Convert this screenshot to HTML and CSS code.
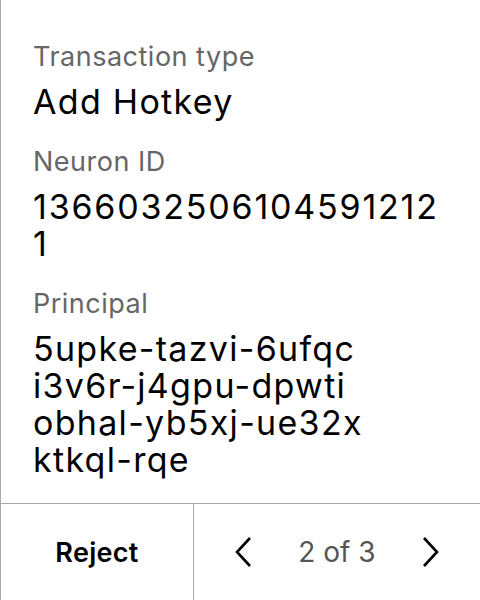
FILE: index.html
```html
<!DOCTYPE html>
<html>
<head>
<meta charset="utf-8">
<link rel="stylesheet" href="styles.css">
</head>
<body>
<div class="screen">
  <div class="content">
    <div class="field">
      <div class="label">Transaction type</div>
      <div class="value">Add Hotkey</div>
    </div>
    <div class="field">
      <div class="label">Neuron ID</div>
      <div class="value num">13660325061045912121</div>
    </div>
    <div class="field">
      <div class="label">Principal</div>
      <div class="value">5upke-tazvi-6ufqc<br>i3v6r-j4gpu-dpwti<br>obhal-yb5xj-ue32x<br>ktkql-rqe</div>
    </div>
  </div>
  <div class="footer">
    <div class="reject">Reject</div>
    <div class="nav">
      <svg class="chev" width="18" height="32" viewBox="0 0 18 32"><path d="M16 2 L3 16 L16 30" fill="none" stroke="#000" stroke-width="2.6"/></svg>
      <span class="pager">2 of 3</span>
      <svg class="chev" width="18" height="32" viewBox="0 0 18 32"><path d="M2 2 L15 16 L2 30" fill="none" stroke="#000" stroke-width="2.6"/></svg>
    </div>
  </div>
</div>
</body>
</html>
```
FILE: styles.css
```css
html, body {
  margin: 0;
  padding: 0;
  background: #fff;
}
.screen {
  width: 480px;
  height: 600px;
  box-sizing: border-box;
  border-left: 1px solid #aaa;
  display: flex;
  flex-direction: column;
  font-family: Inter, "Noto Sans", sans-serif;
  color: #000;
}
.content {
  flex: 1;
  padding: 41px 32px 0 32px;
  display: flex;
  flex-direction: column;
  gap: 26px;
}
.field {
  display: flex;
  flex-direction: column;
  gap: 10px;
}
.label {
  font-size: 27px;
  line-height: 32px;
  letter-spacing: 0.5px;
  color: #666;
}
.value {
  font-size: 34px;
  line-height: 37px;
  letter-spacing: 1.3px;
  word-break: break-all;
}
.value.num {
  letter-spacing: 1.8px;
}
.footer {
  height: 96px;
  border-top: 1px solid #aaa;
  display: flex;
}
.reject {
  width: 192px;
  border-right: 1px solid #aaa;
  display: flex;
  align-items: center;
  justify-content: center;
  font-size: 27px;
  font-weight: 600;
  letter-spacing: 0.3px;
}
.nav {
  flex: 1;
  display: flex;
  align-items: center;
  justify-content: center;
  gap: 46px;
}
.pager {
  font-size: 28px;
  color: #555;
}
.chev {
  display: block;
}
```
